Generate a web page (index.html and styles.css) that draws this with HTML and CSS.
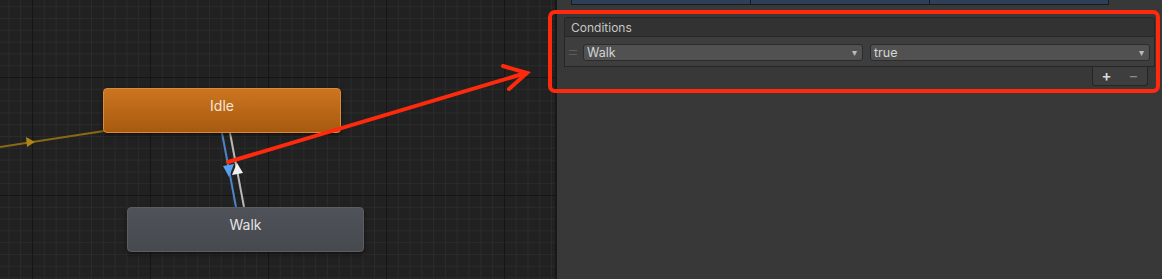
FILE: index.html
```html
<!DOCTYPE html>
<html lang="en">
<head>
  <meta charset="UTF-8">
  <title>Animator - Transition Conditions</title>
  <link rel="stylesheet" href="styles.css">
</head>
<body>

<div class="editor">
  <!-- Graph canvas -->
  <div class="graph">
    <svg class="links" width="555" height="279" viewBox="0 0 555 279">
      <line x1="0" y1="147" x2="104" y2="131" stroke="#8a6914" stroke-width="2"/>
      <polygon points="35,142 26,137 27,147" fill="#b08418"/>
      <line x1="222" y1="133" x2="236" y2="207" stroke="#4d86c8" stroke-width="2"/>
      <line x1="230" y1="133" x2="244" y2="207" stroke="#b9b9b9" stroke-width="2"/>
      <polygon points="229,177 223,166 234,164" fill="#5aa0f0"/>
      <polygon points="237,163 232,175 243,173" fill="#f2f2f2"/>
    </svg>
    <div class="state state-default node-idle">Idle</div>
    <div class="state node-walk">Walk</div>
  </div>

  <!-- Inspector -->
  <div class="inspector">
    <div class="settings-strip">
      <div class="cell"></div>
      <div class="cell"></div>
      <div class="cell"></div>
    </div>

    <div class="conditions">
      <div class="conditions-header">Conditions</div>
      <div class="conditions-body">
        <div class="cond-row">
          <span class="handle"></span>
          <div class="dropdown dd-param">Walk<span class="caret">&#9662;</span></div>
          <div class="dropdown dd-value">true<span class="caret">&#9662;</span></div>
        </div>
      </div>
      <div class="conditions-footer">
        <div class="footer-buttons">
          <span class="btn">+</span>
          <span class="btn minus">&minus;</span>
        </div>
      </div>
    </div>
  </div>
</div>

<!-- Red annotation -->
<svg class="annotation" width="1162" height="279" viewBox="0 0 1162 279">
  <rect x="550" y="12" width="608" height="79" rx="5" fill="none" stroke="#ff2a0e" stroke-width="4"/>
  <g stroke="#ff2a0e" stroke-width="4" stroke-linecap="round" fill="none">
    <line x1="228" y1="162" x2="526" y2="73"/>
    <polyline points="503,66 527,73 509,89"/>
  </g>
</svg>

</body>
</html>
```

FILE: styles.css
```css
body {
  margin: 0;
  width: 1162px;
  height: 279px;
  overflow: hidden;
  background: #383838;
  font-family: 'Inter', 'Noto Sans', sans-serif;
  position: relative;
}
.editor {
  display: flex;
  height: 279px;
}

/* Graph */
.graph {
  position: relative;
  width: 555px;
  flex-shrink: 0;
  background-color: #212121;
  background-image:
    linear-gradient(to right, #151515 1px, transparent 1px),
    linear-gradient(to bottom, #151515 1px, transparent 1px),
    linear-gradient(to right, #2b2b2b 1px, transparent 1px),
    linear-gradient(to bottom, #2b2b2b 1px, transparent 1px);
  background-size: 118px 118px, 118px 118px, 11.8px 11.8px, 11.8px 11.8px;
  background-position: 32px 77px, 32px 77px, 32px 77px, 32px 77px;
  border-right: 2px solid #181818;
}
.links {
  position: absolute;
  top: 0;
  left: 0;
}
.state {
  position: absolute;
  box-sizing: border-box;
  height: 45px;
  padding-top: 8px;
  border-radius: 4px;
  text-align: center;
  font-size: 14px;
  line-height: 17px;
  color: #e4e4e4;
  background: linear-gradient(#4f5359, #46494e);
  border: 1px solid #5a5e64;
  box-shadow: 0 2px 4px rgba(0,0,0,0.5);
}
.state-default {
  background: linear-gradient(#cc7520, #a75a0f);
  border-color: #d98a3a;
  color: #f4e6d8;
}
.node-idle {
  left: 103px;
  top: 88px;
  width: 238px;
}
.node-walk {
  left: 127px;
  top: 207px;
  width: 237px;
}

/* Inspector */
.inspector {
  flex: 1;
  padding: 0 5px 0 7px;
  background: #383838;
}
.settings-strip {
  display: flex;
  margin-left: 7px;
  width: 536px;
  height: 4px;
  background: #2d4058;
  border: 1px solid #1b1b1b;
  border-top: none;
}
.settings-strip .cell {
  flex: 1;
  border-right: 1px solid #1b1b1b;
}
.settings-strip .cell:last-child {
  border-right: none;
}
.conditions {
  margin-top: 12px;
  margin-right: 2px;
}
.conditions-header {
  height: 20px;
  box-sizing: border-box;
  padding-left: 6px;
  font-size: 12px;
  line-height: 20px;
  color: #c6c6c6;
  background: #323232;
  border: 1px solid #262626;
  border-radius: 3px 3px 0 0;
}
.conditions-body {
  height: 30px;
  box-sizing: border-box;
  padding: 7px 4px 0 4px;
  background: #3e3e3e;
  border: 1px solid #262626;
  border-top: none;
}
.cond-row {
  display: flex;
  align-items: center;
  gap: 7px;
}
.handle {
  width: 8px;
  height: 3px;
  border-top: 1px solid #5c5c5c;
  border-bottom: 1px solid #5c5c5c;
  margin-right: -1px;
}
.dropdown {
  position: relative;
  box-sizing: border-box;
  height: 17px;
  padding-left: 3px;
  font-size: 12.5px;
  line-height: 15px;
  color: #d4d4d4;
  background: #515151;
  border: 1px solid #2c2c2c;
  border-radius: 3px;
}
.dd-param {
  width: 280px;
}
.dd-value {
  flex: 1;
}
.caret {
  position: absolute;
  right: 5px;
  top: 0;
  font-size: 10px;
  color: #bdbdbd;
}
.conditions-footer {
  display: flex;
  justify-content: flex-end;
  padding-right: 7px;
}
.footer-buttons {
  display: flex;
  width: 56px;
  height: 19px;
  box-sizing: border-box;
  background: #3e3e3e;
  border: 1px solid #262626;
  border-top: none;
  border-radius: 0 0 3px 3px;
}
.btn {
  flex: 1;
  text-align: center;
  font-size: 15px;
  font-weight: 600;
  line-height: 18px;
  color: #dcdcdc;
}
.btn.minus {
  color: #8e8e8e;
  font-weight: 400;
}

/* Annotation overlay */
.annotation {
  position: absolute;
  top: 0;
  left: 0;
  pointer-events: none;
}
```
